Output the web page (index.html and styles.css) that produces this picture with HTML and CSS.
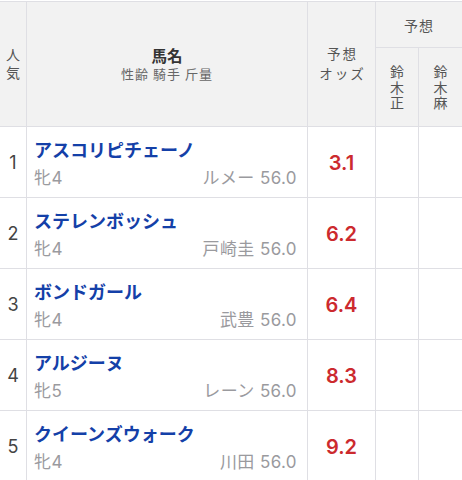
FILE: index.html
```html
<!DOCTYPE html>
<html lang="ja">
<head>
<meta charset="utf-8">
<link rel="stylesheet" href="styles.css">
</head>
<body>
<div class="table">
  <div class="hcell h-pop"><span class="vtext pop-text">人気</span></div>
  <div class="hcell h-name">
    <div class="h-title">馬名</div>
    <div class="h-sub">性齢 騎手 斤量</div>
  </div>
  <div class="hcell h-odds"><span class="odds-label">予想<br>オッズ</span></div>
  <div class="hcell h-pred">予想</div>
  <div class="hcell h-person"><span class="vtext">鈴木正</span></div>
  <div class="hcell h-person"><span class="vtext">鈴木麻</span></div>

  <div class="cell num">1</div>
  <div class="cell horse"><div class="horse-name">アスコリピチェーノ</div><div class="horse-meta"><span>牝4</span><span>ルメー 56.0</span></div></div>
  <div class="cell odds">3.1</div>
  <div class="cell"></div>
  <div class="cell"></div>

  <div class="cell num">2</div>
  <div class="cell horse"><div class="horse-name">ステレンボッシュ</div><div class="horse-meta"><span>牝4</span><span>戸崎圭 56.0</span></div></div>
  <div class="cell odds">6.2</div>
  <div class="cell"></div>
  <div class="cell"></div>

  <div class="cell num">3</div>
  <div class="cell horse"><div class="horse-name">ボンドガール</div><div class="horse-meta"><span>牝4</span><span>武豊 56.0</span></div></div>
  <div class="cell odds">6.4</div>
  <div class="cell"></div>
  <div class="cell"></div>

  <div class="cell num">4</div>
  <div class="cell horse"><div class="horse-name">アルジーヌ</div><div class="horse-meta"><span>牝5</span><span>レーン 56.0</span></div></div>
  <div class="cell odds">8.3</div>
  <div class="cell"></div>
  <div class="cell"></div>

  <div class="cell num">5</div>
  <div class="cell horse"><div class="horse-name">クイーンズウォーク</div><div class="horse-meta"><span>牝4</span><span>川田 56.0</span></div></div>
  <div class="cell odds">9.2</div>
  <div class="cell"></div>
  <div class="cell"></div>
</div>
</body>
</html>
```

FILE: styles.css
```css
html, body {
  margin: 0;
  padding: 0;
  background: #fff;
}
body {
  padding-top: 1px;
  font-family: Inter, "Noto Sans CJK JP", sans-serif;
  overflow: hidden;
}
.table {
  display: grid;
  grid-template-columns: 26px 280px 67px 42px 43px;
  grid-template-rows: 45px 78px repeat(5, 70px);
  gap: 1px;
  background: #dfdfe4;
  border-top: 1px solid #dfdfe4;
  width: 462px;
}
.hcell {
  background: #f2f2f2;
  color: #555;
  display: flex;
  align-items: center;
  justify-content: center;
  font-family: "Noto Sans CJK JP", sans-serif;
  font-size: 14px;
}
.vtext {
  writing-mode: vertical-rl;
  text-orientation: upright;
  line-height: 16px;
  letter-spacing: 1.5px;
}
.pop-text {
  letter-spacing: 4px;
  margin-bottom: -4px;
}
.h-pop {
  grid-row: 1 / 3;
  grid-column: 1;
}
.h-name {
  grid-row: 1 / 3;
  grid-column: 2;
  flex-direction: column;
}
.h-title {
  font-size: 15.5px;
  font-weight: bold;
  color: #333;
  line-height: 19px;
}
.h-sub {
  font-size: 13px;
  color: #666;
  line-height: 17px;
  letter-spacing: 1px;
}
.h-odds {
  grid-row: 1 / 3;
  grid-column: 3;
}
.odds-label {
  text-align: center;
  font-size: 13.5px;
  line-height: 19.6px;
  letter-spacing: 2px;
  margin-right: -2px;
}
.h-pred {
  grid-row: 1;
  grid-column: 4 / 6;
  letter-spacing: 1px;
}
.h-person {
  grid-row: 2;
  padding-top: 2px;
}
.cell {
  background: #fff;
}
.num {
  display: flex;
  align-items: center;
  justify-content: center;
  font-size: 18px;
  color: #444;
}
.horse {
  padding: 8px 10px 0 7px;
}
.horse-name {
  font-family: "Noto Sans CJK JP", sans-serif;
  font-weight: bold;
  font-size: 18px;
  line-height: 28px;
  color: #1440a8;
  white-space: nowrap;
}
.horse-meta {
  display: flex;
  justify-content: space-between;
  font-size: 17px;
  line-height: 30px;
  color: #9a9a9e;
  letter-spacing: 0.4px;
}
.odds {
  display: flex;
  align-items: center;
  justify-content: center;
  padding-top: 2px;
  font-size: 20px;
  font-weight: 600;
  color: #cc2a2e;
}
```
